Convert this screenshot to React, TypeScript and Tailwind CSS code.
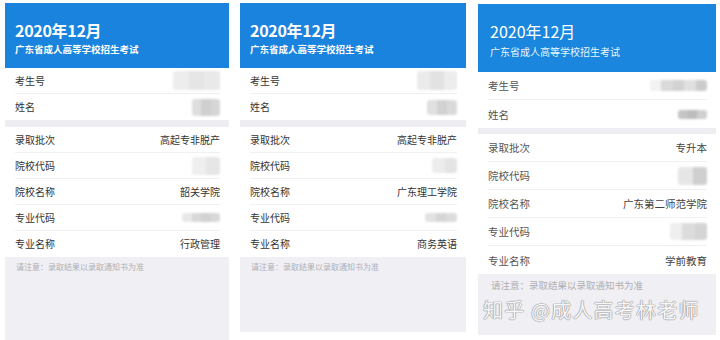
import React from "react";

type Value = { text?: string; mosaic?: { size: string; cells: string[] } };

type CardProps = {
  variant: "ios" | "android";
  width: string;
  top: string;
  rows: { label: string; value: Value }[];
  noticeHeight: string;
  watermark?: boolean;
};

const Mosaic = ({ size, cells }: { size: string; cells: string[] }) => (
  <div className={`flex overflow-hidden rounded-[3px] blur-[1.2px] ${size}`}>
    {cells.map((c, i) => (
      <div key={i} className={`flex-1 ${c}`} />
    ))}
  </div>
);

const Card = ({ variant, width, top, rows, noticeHeight, watermark }: CardProps) => {
  const ios = variant === "ios";
  const rowH = ios ? "h-[26px]" : "h-[28px]";
  const labelCls = ios
    ? "text-[10px] leading-[12px] text-[#333]"
    : "text-[10.5px] leading-[13px] text-[#555]";
  const valueCls = ios
    ? "text-[10px] leading-[12px] text-[#333]"
    : "text-[10.5px] leading-[13px] text-[#444]";

  const renderRow = (r: { label: string; value: Value }, last: boolean) => (
    <div
      key={r.label}
      className={`${rowH} ml-[10px] mr-[9px] flex items-center justify-between ${
        last ? "" : "border-b border-[#f0f0f2]"
      }`}
    >
      <span className={labelCls}>{r.label}</span>
      {r.value.text ? (
        <span className={valueCls}>{r.value.text}</span>
      ) : r.value.mosaic ? (
        <Mosaic size={r.value.mosaic.size} cells={r.value.mosaic.cells} />
      ) : null}
    </div>
  );

  return (
    <div className={`${width} ${top} flex flex-col bg-white`}>
      <div
        className={
          ios
            ? "h-[65px] bg-[#1a83dd] pl-[10px] pt-[17px] text-white"
            : "h-[68px] bg-[#1a86de] pl-[12px] pt-[17px] text-white"
        }
      >
        <div
          className={
            ios
              ? "text-[16px] leading-[20px] font-bold tracking-[-0.3px]"
              : "text-[16px] leading-[20px] font-normal"
          }
        >
          2020年12月
        </div>
        <div
          className={
            ios
              ? "mt-[3px] text-[9.5px] leading-[12px] font-bold"
              : "mt-[4px] text-[10px] leading-[13px] font-normal text-white/95"
          }
        >
          广东省成人高等学校招生考试
        </div>
      </div>
      {rows.slice(0, 2).map((r, i) => renderRow(r, i === 1))}
      <div className={ios ? "h-[7px] bg-[#eeeef2]" : "h-[6px] bg-[#eeeef2]"} />
      {rows.slice(2).map((r, i) => renderRow(r, i === rows.length - 3))}
      <div className={`${noticeHeight} bg-[#efeff4]`}>
        <div
          className={
            ios
              ? "pl-[11px] pt-[4px] text-[8px] leading-[12px] text-[#b0b0b5]"
              : "pl-[13px] pt-[5px] text-[9.5px] leading-[13px] text-[#b0b0b5]"
          }
        >
          请注意：录取结果以录取通知书为准
        </div>
        {watermark && (
          <div className="mt-[6px] pl-[5px] text-[20px] leading-[24px] tracking-[1.2px] text-[#f7f7f9] [text-shadow:0_0_1px_#909090,0_0_1px_#909090,0_0_1px_#909090]">
            知乎 @成人高考林老师
          </div>
        )}
      </div>
    </div>
  );
};

const App = () => {
  return (
    <div className="w-[720px] h-[340px] overflow-hidden bg-white flex items-start pl-[5px] font-['Noto_Sans_CJK_SC',sans-serif]">
      <Card
        variant="ios"
        width="w-[224px]"
        top="mt-[3px]"
        noticeHeight="h-[84px]"
        rows={[
          { label: "考生号", value: { mosaic: { size: "w-[47px] h-[19px]", cells: ["bg-[#ededed]", "bg-[#e5e5e5]", "bg-[#e9e9e9]"] } } },
          { label: "姓名", value: { mosaic: { size: "w-[28px] h-[17px]", cells: ["bg-[#dedede]", "bg-[#cfcfcf]", "bg-[#d6d6d6]"] } } },
          { label: "录取批次", value: { text: "高起专非脱产" } },
          { label: "院校代码", value: { mosaic: { size: "w-[28px] h-[18px]", cells: ["bg-[#efefef]", "bg-[#e6e6e6]"] } } },
          { label: "院校名称", value: { text: "韶关学院" } },
          { label: "专业代码", value: { mosaic: { size: "w-[38px] h-[9px]", cells: ["bg-[#e8e8e8]", "bg-[#d9d9d9]", "bg-[#d2d2d2]", "bg-[#d8d8d8]"] } } },
          { label: "专业名称", value: { text: "行政管理" } },
        ]}
      />
      <div className="w-[11px] shrink-0" />
      <Card
        variant="ios"
        width="w-[226px]"
        top="mt-[3px]"
        noticeHeight="h-[75px]"
        rows={[
          { label: "考生号", value: { mosaic: { size: "w-[40px] h-[19px]", cells: ["bg-[#ebebeb]", "bg-[#e2e2e2]", "bg-[#ececec]"] } } },
          { label: "姓名", value: { mosaic: { size: "w-[30px] h-[15px]", cells: ["bg-[#e0e0e0]", "bg-[#d2d2d2]", "bg-[#dadada]"] } } },
          { label: "录取批次", value: { text: "高起专非脱产" } },
          { label: "院校代码", value: { mosaic: { size: "w-[25px] h-[15px]", cells: ["bg-[#ececec]", "bg-[#e4e4e4]"] } } },
          { label: "院校名称", value: { text: "广东理工学院" } },
          { label: "专业代码", value: { mosaic: { size: "w-[32px] h-[9px]", cells: ["bg-[#e2e2e2]", "bg-[#d6d6d6]", "bg-[#dcdcdc]"] } } },
          { label: "专业名称", value: { text: "商务英语" } },
        ]}
      />
      <div className="w-[12px] shrink-0" />
      <Card
        variant="android"
        width="w-[238px]"
        top="mt-[4px]"
        noticeHeight="h-[61px]"
        watermark
        rows={[
          { label: "考生号", value: { mosaic: { size: "w-[57px] h-[11px]", cells: ["bg-[#f2f2f2]", "bg-[#dadada]", "bg-[#d2d2d2]", "bg-[#e0e0e0]", "bg-[#cccccc]"] } } },
          { label: "姓名", value: { mosaic: { size: "w-[29px] h-[9px]", cells: ["bg-[#c4c4c4]", "bg-[#bcbcbc]", "bg-[#d0d0d0]"] } } },
          { label: "录取批次", value: { text: "专升本" } },
          { label: "院校代码", value: { mosaic: { size: "w-[29px] h-[18px]", cells: ["bg-[#e6e6e6]", "bg-[#cfcfcf]"] } } },
          { label: "院校名称", value: { text: "广东第二师范学院" } },
          { label: "专业代码", value: { mosaic: { size: "w-[37px] h-[17px]", cells: ["bg-[#efefef]", "bg-[#dcdcdc]", "bg-[#d4d4d4]"] } } },
          { label: "专业名称", value: { text: "学前教育" } },
        ]}
      />
    </div>
  );
};

export default App;
